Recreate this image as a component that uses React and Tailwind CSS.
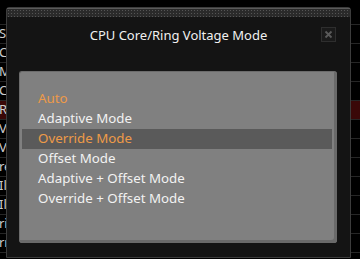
import React from 'react'

const bgRows = ['', 'Se', 'Co', 'Mo', 'Ca', 'Ri', 'Vo', 'Ve', 're', 'Il', 'Il', 'ri', 'rr', '']

const modes = ['Auto', 'Adaptive Mode', 'Override Mode', 'Offset Mode', 'Adaptive + Offset Mode', 'Override + Offset Mode']

export default function App() {
  const selected = 2
  return (
    <div className="relative w-[360px] h-[259px] overflow-hidden bg-black" style={{ fontFamily: '"Noto Sans", "Open Sans", sans-serif' }}>
      {/* table behind the dialog */}
      <div className="pt-[6px]">
        {bgRows.map((t, i) => (
          <div
            key={i}
            className={`h-[19px] border-b border-[#262626] flex items-center text-[13px] text-[#cccccc] -ml-[1px] ${i === 5 ? 'bg-[#3a0808]' : ''}`}
          >
            {t}
          </div>
        ))}
      </div>

      {/* dialog */}
      <div className="absolute left-[6px] top-[7px] w-[345px] h-[251px] bg-[#141414] border border-[#3c3c3c] rounded-t-[3px] flex flex-col">
        <div className="h-[9px] bg-[#2a2a2a] bg-[radial-gradient(#555555_0.8px,transparent_0.9px)] bg-[length:3px_3px] border-t border-[#5a5a5a]" />
        <div className="relative h-[38px] flex items-center justify-center">
          <span className="text-[13px] text-[#f0f0f0]">CPU Core/Ring Voltage Mode</span>
          <div className="absolute right-[14px] top-[10px] w-[15px] h-[15px] border border-[#2e2e2e] bg-[#1a1a1a] flex items-center justify-center">
            <svg width="9" height="9" viewBox="0 0 9 9">
              <path d="M1.5 1.5L7.5 7.5M7.5 1.5L1.5 7.5" stroke="#5a5a5a" strokeWidth="1.8" />
            </svg>
          </div>
        </div>
        <div className="mt-[16px] ml-[12px] w-[318px] h-[172px] bg-[#808080] rounded-[3px] border-t border-l border-[#6c6c6c] shadow-[inset_-3px_-3px_0_#6a6a6a] pt-[17px] pl-[2px] pr-[5px]">
          {modes.map((m, i) => (
            <div
              key={m}
              className={`h-[20px] flex items-center pl-[16px] text-[13.3px] ${i === selected ? 'bg-[#5a5a5a]' : ''} ${i === 0 || i === selected ? 'text-[#ee9a48]' : 'text-[#f2f2f2]'}`}
            >
              {m}
            </div>
          ))}
        </div>
      </div>
    </div>
  )
}
